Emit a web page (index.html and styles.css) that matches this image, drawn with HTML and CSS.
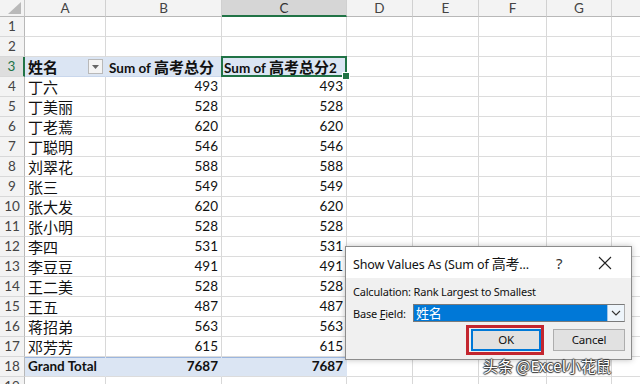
FILE: index.html
```html
<!DOCTYPE html>
<html>
<head>
<meta charset="utf-8">
<link rel="stylesheet" href="styles.css">
</head>
<body>
<div class="sheet">
  <div class="corner"><span class="tri"></span></div>
  <div class="ch">A</div><div class="ch">B</div><div class="ch sel">C</div><div class="ch">D</div><div class="ch">E</div><div class="ch">F</div><div class="ch">G</div><div class="ch"></div>

  <div class="rh">1</div><div class="c"></div><div class="c"></div><div class="c"></div><div class="c"></div><div class="c"></div><div class="c"></div><div class="c"></div><div class="c"></div>
  <div class="rh">2</div><div class="c"></div><div class="c"></div><div class="c"></div><div class="c"></div><div class="c"></div><div class="c"></div><div class="c"></div><div class="c"></div>
  <div class="rh rsel">3</div>
  <div class="c pv b filt"><span class="zh">姓名</span><span class="fbtn"><svg width="7" height="4" viewBox="0 0 7 4"><path d="M0 0h7L3.5 4z" fill="#666"/></svg></span></div>
  <div class="c pv b">Sum of <span class="zh">高考总分</span></div>
  <div class="c pv b active">Sum of <span class="zh">高考总分</span>2</div>
  <div class="c"></div><div class="c"></div><div class="c"></div><div class="c"></div><div class="c"></div>

  <div class="rh">4</div><div class="c"><span class="zh">丁六</span></div><div class="c n">493</div><div class="c n">493</div><div class="c"></div><div class="c"></div><div class="c"></div><div class="c"></div><div class="c"></div>
  <div class="rh">5</div><div class="c"><span class="zh">丁美丽</span></div><div class="c n">528</div><div class="c n">528</div><div class="c"></div><div class="c"></div><div class="c"></div><div class="c"></div><div class="c"></div>
  <div class="rh">6</div><div class="c"><span class="zh">丁老蔫</span></div><div class="c n">620</div><div class="c n">620</div><div class="c"></div><div class="c"></div><div class="c"></div><div class="c"></div><div class="c"></div>
  <div class="rh">7</div><div class="c"><span class="zh">丁聪明</span></div><div class="c n">546</div><div class="c n">546</div><div class="c"></div><div class="c"></div><div class="c"></div><div class="c"></div><div class="c"></div>
  <div class="rh">8</div><div class="c"><span class="zh">刘翠花</span></div><div class="c n">588</div><div class="c n">588</div><div class="c"></div><div class="c"></div><div class="c"></div><div class="c"></div><div class="c"></div>
  <div class="rh">9</div><div class="c"><span class="zh">张三</span></div><div class="c n">549</div><div class="c n">549</div><div class="c"></div><div class="c"></div><div class="c"></div><div class="c"></div><div class="c"></div>
  <div class="rh">10</div><div class="c"><span class="zh">张大发</span></div><div class="c n">620</div><div class="c n">620</div><div class="c"></div><div class="c"></div><div class="c"></div><div class="c"></div><div class="c"></div>
  <div class="rh">11</div><div class="c"><span class="zh">张小明</span></div><div class="c n">528</div><div class="c n">528</div><div class="c"></div><div class="c"></div><div class="c"></div><div class="c"></div><div class="c"></div>
  <div class="rh">12</div><div class="c"><span class="zh">李四</span></div><div class="c n">531</div><div class="c n">531</div><div class="c"></div><div class="c"></div><div class="c"></div><div class="c"></div><div class="c"></div>
  <div class="rh">13</div><div class="c"><span class="zh">李豆豆</span></div><div class="c n">491</div><div class="c n">491</div><div class="c"></div><div class="c"></div><div class="c"></div><div class="c"></div><div class="c"></div>
  <div class="rh">14</div><div class="c"><span class="zh">王二美</span></div><div class="c n">528</div><div class="c n">528</div><div class="c"></div><div class="c"></div><div class="c"></div><div class="c"></div><div class="c"></div>
  <div class="rh">15</div><div class="c"><span class="zh">王五</span></div><div class="c n">487</div><div class="c n">487</div><div class="c"></div><div class="c"></div><div class="c"></div><div class="c"></div><div class="c"></div>
  <div class="rh">16</div><div class="c"><span class="zh">蒋招弟</span></div><div class="c n">563</div><div class="c n">563</div><div class="c"></div><div class="c"></div><div class="c"></div><div class="c"></div><div class="c"></div>
  <div class="rh">17</div><div class="c"><span class="zh">邓芳芳</span></div><div class="c n">615</div><div class="c n">615</div><div class="c"></div><div class="c"></div><div class="c"></div><div class="c"></div><div class="c"></div>
  <div class="rh">18</div><div class="c pv tot b">Grand Total</div><div class="c pv tot b n">7687</div><div class="c pv tot b n">7687</div><div class="c"></div><div class="c"></div><div class="c"></div><div class="c"></div><div class="c"></div>
  <div class="rh">19</div><div class="c"></div><div class="c"></div><div class="c"></div><div class="c"></div><div class="c"></div><div class="c"></div><div class="c"></div><div class="c"></div>
</div>

<div class="dialog">
  <div class="dtitle">
    <span class="dtext">Show Values As (Sum of <span class="dzh">高考</span>...</span>
    <span class="help">?</span>
    <span class="close"><svg width="14" height="14" viewBox="0 0 14 14"><path d="M1 1L13 13M13 1L1 13" stroke="#222" stroke-width="1.1"/></svg></span>
  </div>
  <div class="dbody">
    <div class="calc">Calculation: Rank Largest to Smallest</div>
    <div class="field">
      <span class="flabel">Base <u>F</u>ield:</span>
      <div class="combo">
        <span class="cval">姓名</span>
        <span class="carrow"><svg width="10" height="6" viewBox="0 0 10 6"><path d="M1 1l4 4 4-4" fill="none" stroke="#333" stroke-width="1.1"/></svg></span>
      </div>
    </div>
    <div class="btns">
      <div class="hl"><div class="btn ok">OK</div></div>
      <div class="btn">Cancel</div>
    </div>
  </div>
</div>

<div class="wm">头条 @Excel小花鼠</div>
</body>
</html>
```

FILE: styles.css
```css
* { box-sizing: border-box; }
html, body { margin: 0; padding: 0; }
body {
  width: 640px;
  height: 384px;
  overflow: hidden;
  position: relative;
  background: #fff;
  font-family: Lato, "Noto Sans CJK SC", sans-serif;
}
.sheet {
  display: grid;
  width: 652px;
  grid-template-columns: 25px 81px 116px 125px 66px 66px 68px 65px 40px;
  grid-template-rows: 17px repeat(19, 20px);
}
.corner {
  background: #f3f3f3;
  border-right: 1px solid #c6c6c6;
  border-bottom: 1px solid #b8b8b8;
  position: relative;
}
.tri {
  position: absolute;
  right: 3px;
  bottom: 2px;
  width: 0;
  height: 0;
  border-left: 13px solid transparent;
  border-bottom: 12px solid #b9b9b9;
}
.ch {
  background: #f3f3f3;
  color: #444;
  font-size: 13.5px;
  line-height: 16px;
  text-align: center;
  border-right: 1px solid #d0d0d0;
  border-bottom: 1px solid #b8b8b8;
}
.ch.sel {
  background: #d6d6d6;
  color: #333;
  border-bottom: 2px solid #217346;
}
.rh {
  background: #f3f3f3;
  color: #444;
  font-size: 13.5px;
  line-height: 19px;
  text-align: center;
  border-right: 1px solid #b8b8b8;
  border-bottom: 1px solid #d8d8d8;
}
.rh.rsel {
  background: #dedede;
  color: #217346;
  border-right: 2px solid #217346;
}
.c {
  font-size: 13.5px;
  line-height: 19px;
  padding: 0 3px;
  color: #111;
  white-space: nowrap;
  overflow: hidden;
  border-right: 1px solid #d8d8d8;
  border-bottom: 1px solid #dcdcdc;
}
.zh { font-size: 15px; font-family: "Noto Sans CJK SC", sans-serif; }
.n { text-align: right; }
.b { font-weight: bold; }
.pv {
  background: #dbe5f3;
  border-right-color: #dbe5f3;
  border-bottom-color: #c9d7ec;
}
.tot {
  box-shadow: inset 0 1px 0 #9cb6de;
  border-bottom-color: #dcdcdc;
}
.filt {
  display: flex;
  align-items: center;
  justify-content: space-between;
  padding-right: 2px;
}
.fbtn {
  width: 15px;
  height: 15px;
  border: 1px solid #b9b9b9;
  background: #f4f4f4;
  display: flex;
  align-items: center;
  justify-content: center;
}
.active {
  position: relative;
  overflow: visible;
  padding-left: 2px;
}
.active::after {
  content: "";
  position: absolute;
  left: -1px;
  top: -1px;
  right: -1px;
  bottom: -1px;
  border: 2px solid #217346;
}
.active::before {
  content: "";
  position: absolute;
  right: -4px;
  bottom: -4px;
  width: 6px;
  height: 6px;
  background: #217346;
  border: 1px solid #fff;
  z-index: 2;
}

.dialog {
  position: absolute;
  left: 345px;
  top: 246px;
  width: 287px;
  height: 114px;
  border: 1px solid #8c8c8c;
  background: #f0f0f0;
  box-shadow: 0 0 6px rgba(0,0,0,0.25);
  font-family: "Noto Sans", "Noto Sans CJK SC", sans-serif;
  display: flex;
  flex-direction: column;
}
.dtitle {
  height: 31px;
  background: #fff;
  display: flex;
  align-items: center;
  padding-left: 7px;
  color: #111;
}
.dtext {
  font-size: 12.5px;
  letter-spacing: -0.15px;
  flex: 1;
}
.dzh { font-size: 14px; }
.help {
  font-size: 15px;
  color: #333;
  width: 20px;
  margin-right: 22px;
}
.close {
  width: 20px;
  margin-right: 13px;
  display: flex;
  align-items: center;
}
.dbody {
  flex: 1;
  padding: 6px 6px 0 7px;
  font-size: 11px;
  color: #111;
  letter-spacing: -0.2px;
}
.calc { line-height: 16px; }
.field {
  display: flex;
  align-items: center;
  margin-top: 4px;
  height: 18px;
}
.flabel { width: 60px; }
.combo {
  flex: 1;
  height: 18px;
  display: flex;
  background: #0078d7;
  border: 1px solid #7a7a7a;
  border-right-color: #adadad;
}
.cval {
  flex: 1;
  color: #fff;
  font-size: 13px;
  line-height: 16px;
  padding-left: 2px;
  font-family: "Noto Sans CJK SC", sans-serif;
}
.carrow {
  width: 17px;
  background: #eef5fb;
  border-left: 1px solid #9ec5e8;
  display: flex;
  align-items: center;
  justify-content: center;
}
.btns {
  display: flex;
  justify-content: flex-end;
  align-items: center;
  margin-top: 3px;
  gap: 9px;
}
.hl {
  border: 3px solid #c3262f;
  padding: 0 0 0 2px;
  height: 30px;
  width: 78px;
  display: flex;
  align-items: center;
}
.btn {
  width: 72px;
  height: 22px;
  background: #e1e1e1;
  border: 1px solid #adadad;
  font-size: 11.5px;
  line-height: 20px;
  text-align: center;
  color: #111;
}
.btn.ok {
  border: 2px solid #0078d7;
  width: 71px;
  line-height: 18px;
}
.wm {
  position: absolute;
  left: 483px;
  top: 355px;
  font-size: 15px;
  font-family: "Noto Sans CJK SC", sans-serif;
  color: #fff;
  text-shadow: 1px 0 1px #333, -1px 0 1px #333, 0 1px 1px #333, 0 -1px 1px #333;
  white-space: nowrap;
}
```
